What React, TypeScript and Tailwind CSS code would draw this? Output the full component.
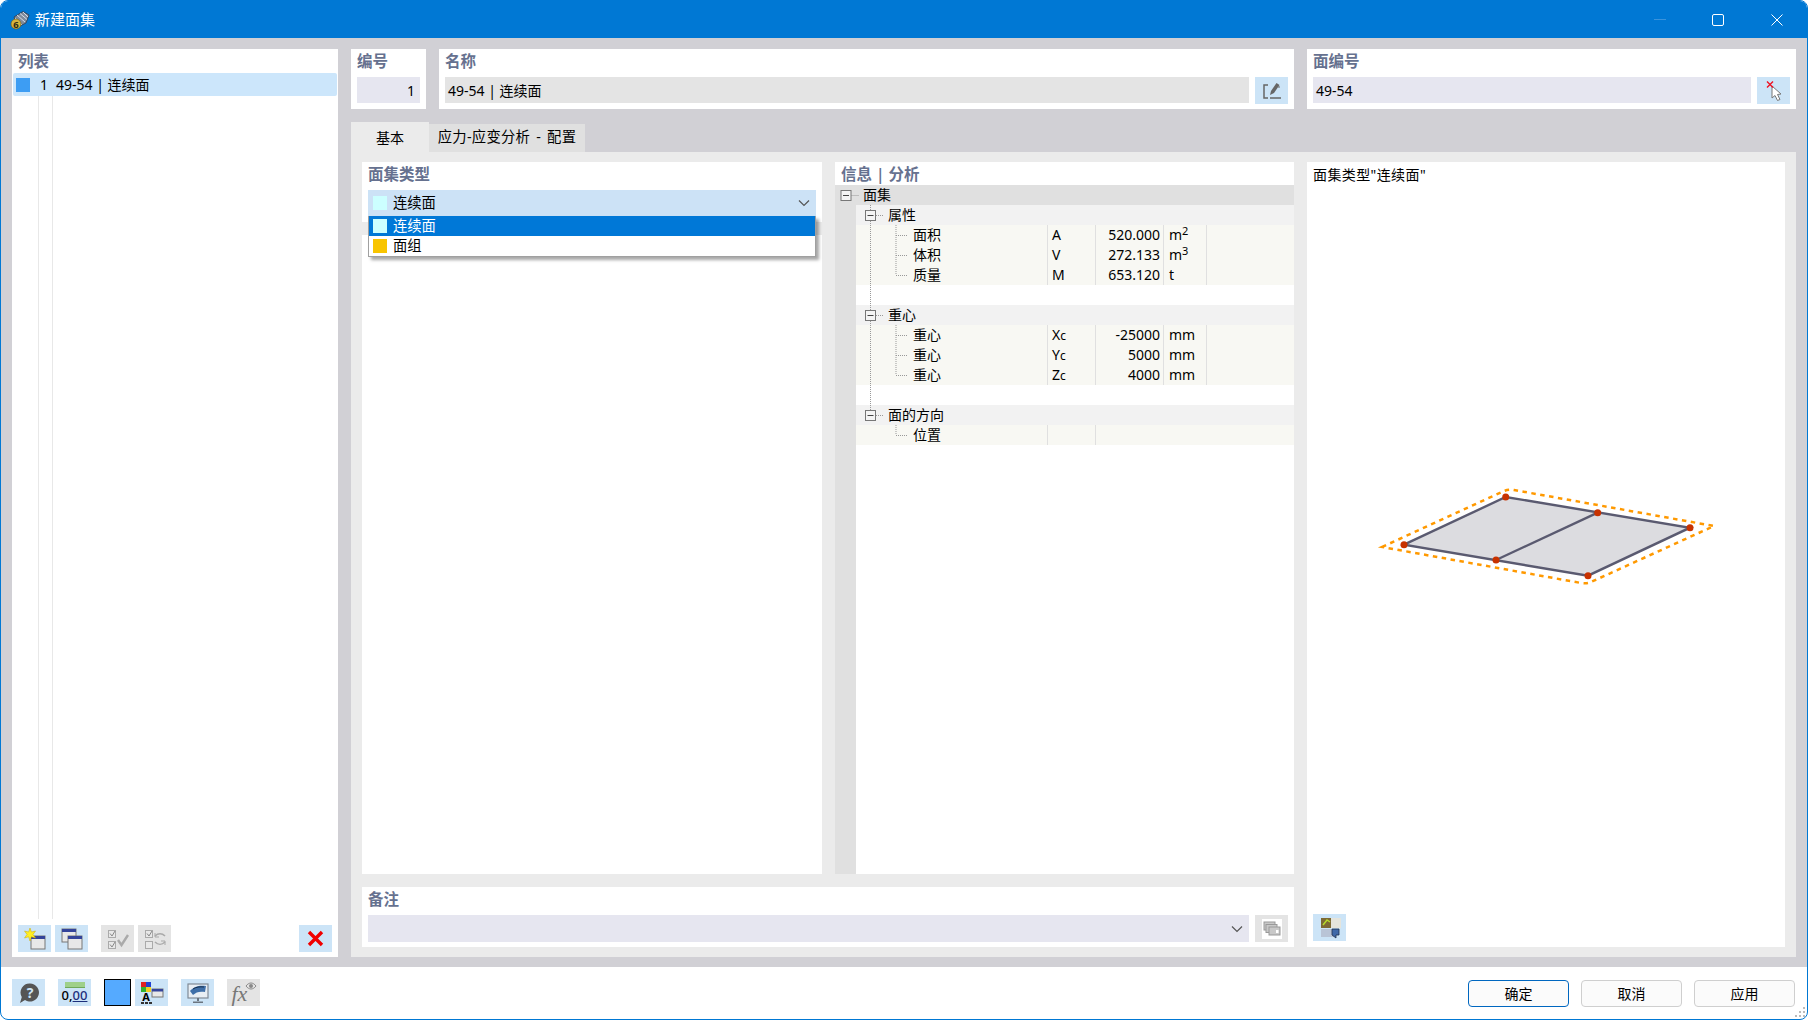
const FONT = "font-['Noto_Sans','Noto_Sans_CJK_SC',sans-serif]";

function Swatch({ color }: { color: string }) {
  return <span className="block h-[14px] w-[14px] shrink-0" style={{ backgroundColor: color }} />;
}

function Chevron() {
  return (
    <svg width="12" height="8" viewBox="0 0 12 8" fill="none" className="shrink-0">
      <path d="M1 1.5 6 6.5 11 1.5" stroke="#555" strokeWidth="1.2" />
    </svg>
  );
}

function Heading({ children }: { children: React.ReactNode }) {
  return <div className="h-[28px] pl-[6px] pt-[2px] text-[15.5px] font-semibold leading-[20px] text-[#66718f]">{children}</div>;
}

function IconBtn({ children, off }: { children: React.ReactNode; off?: boolean }) {
  return (
    <button className={`flex h-[27px] w-[33px] shrink-0 items-center justify-center ${off ? "bg-[#e4e4e4]" : "bg-[#cce4f7]"}`}>
      {children}
    </button>
  );
}

function WinGlyph({ x, y }: { x: number; y: number }) {
  return (
    <g>
      <rect x={x} y={y} width="14" height="13" fill="#e8e8e8" stroke="#777" />
      <rect x={x} y={y} width="14" height="3" fill="#34449a" />
    </g>
  );
}

function NewIcon() {
  return (
    <svg width="24" height="24" viewBox="0 0 24 24">
      <WinGlyph x={8} y={9} />
      <path d="M7 1 8.4 5 12.5 4 10 7.4 12.5 11 8.4 9.8 7 14 5.6 9.8 1.5 11 4 7.4 1.5 4 5.6 5Z" fill="#ffee22" stroke="#c8a800" strokeWidth=".5" />
    </svg>
  );
}

function CopyIcon() {
  return (
    <svg width="24" height="24" viewBox="0 0 24 24">
      <WinGlyph x={2} y={2} />
      <WinGlyph x={8} y={9} />
    </svg>
  );
}

function CheckAllIcon() {
  return (
    <svg width="24" height="24" viewBox="0 0 24 24" fill="none">
      <rect x="2.5" y="3.5" width="7" height="7" fill="#e8e8e8" stroke="#aaa" />
      <rect x="2.5" y="14.5" width="7" height="7" fill="#e8e8e8" stroke="#aaa" />
      <path d="M4 6.5 6 9l3-5M4 17.5 6 20l3-5" stroke="#888" />
      <path d="M12 13 15.5 18 22 8" stroke="#aaa" strokeWidth="2.4" />
    </svg>
  );
}

function ToggleIcon() {
  return (
    <svg width="24" height="24" viewBox="0 0 24 24" fill="none">
      <rect x="2.5" y="3.5" width="7" height="7" fill="#e8e8e8" stroke="#aaa" />
      <rect x="2.5" y="14.5" width="7" height="7" fill="#e8e8e8" stroke="#aaa" />
      <path d="M4 6.5 6 9l3-5" stroke="#888" />
      <path d="M12 9c3-3 7-3 10 0M22 15c-3 3-7 3-10 0" stroke="#aaa" strokeWidth="1.6" />
      <path d="M12 6v4h4M22 18v-4h-4" stroke="#aaa" />
    </svg>
  );
}

function DeleteIcon() {
  return (
    <svg width="17" height="17" viewBox="0 0 17 17">
      <path d="M2 2 15 15M15 2 2 15" stroke="#f00000" strokeWidth="3.4" />
    </svg>
  );
}

function HelpIcon() {
  return (
    <svg width="24" height="24" viewBox="0 0 24 24">
      <path d="M13 2.5a9 9 0 1 1-5 16.500L3 22l1.800-6A9 9 0 0 1 13 2.500Z" fill="#555" />
      <text x="13" y="16.5" textAnchor="middle" fontSize="14" fontWeight="700" fill="#cce4f7">?</text>
    </svg>
  );
}

function DecimalIcon() {
  return (
    <div className="flex flex-col items-center">
      <span className="block h-[6px] w-[20px] border-b border-[#6fa85a] bg-[#9fd08a]" />
      <span className="text-[13px] font-medium leading-[15px] text-black">
        0,<span className="text-[#1c2f7c] underline">00</span>
      </span>
    </div>
  );
}

function ColorsIcon() {
  return (
    <svg width="24" height="24" viewBox="0 0 24 24">
      <rect x="1" y="1" width="5" height="5" fill="#e02020" />
      <rect x="6" y="1" width="5" height="5" fill="#2040d0" />
      <rect x="1" y="6" width="5" height="5" fill="#30b030" />
      <rect x="6" y="6" width="5" height="5" fill="#f0d020" />
      <rect x="12" y="8" width="11" height="8" fill="#e8e8e8" stroke="#777" />
      <rect x="12" y="8" width="11" height="2.5" fill="#34449a" />
      <text x="6" y="20" textAnchor="middle" fontSize="11" fontWeight="700" fill="#000">A</text>
      <path d="M1 21h3v2H1zM5 21h3v2H5zM9 21h3v2H9z" fill="#333" />
    </svg>
  );
}

function MonitorIcon() {
  return (
    <svg width="24" height="24" viewBox="0 0 24 24">
      <rect x="2" y="3" width="20" height="14" fill="#e8eef4" stroke="#7f8a96" strokeWidth="1.2" />
      <path d="M4 10C8 5 14 4 20 5l-1 6c-5-1-9 0-12 3Z" fill="#3f6fa8" />
      <path d="M7 8c3-2 7-2.5 11-2" stroke="#16304f" fill="none" />
      <path d="M11 17h2v3h-2zM7 20.500h10V22H7z" fill="#6b7580" />
    </svg>
  );
}

function FxIcon() {
  return (
    <div className="relative h-[24px] w-[26px]">
      <span className="absolute bottom-[-1px] left-[1px] font-['Liberation_Serif',serif] text-[22px] italic leading-[24px] text-[#777]">fx</span>
      <svg width="12" height="10" viewBox="0 0 12 10" className="absolute right-0 top-0" fill="none">
        <path d="M1 5c3-4 7-4 10 0-3 4-7 4-10 0Z" stroke="#888" />
        <circle cx="6" cy="5" r="2" fill="#888" />
      </svg>
    </div>
  );
}

const GROUPS = [
  {
    title: "属性",
    items: [
      { label: "面积", sym: "A", val: "520.000", unit: "m", sup: "2" },
      { label: "体积", sym: "V", val: "272.133", unit: "m", sup: "3" },
      { label: "质量", sym: "M", val: "653.120", unit: "t" },
    ],
  },
  {
    title: "重心",
    items: [
      { label: "重心", sym: "X", sub: "c", val: "-25000", unit: "mm" },
      { label: "重心", sym: "Y", sub: "c", val: "5000", unit: "mm" },
      { label: "重心", sym: "Z", sub: "c", val: "4000", unit: "mm" },
    ],
  },
];

type Item = { label: string; sym: string; sub?: string; val?: string; unit?: string; sup?: string };

function PropRow({ item, short }: { item: Item; short?: boolean }) {
  return (
    <div className="flex h-[20px] bg-[#f8f8f3] leading-[20px]">
      <div className="w-[191px] pl-[57px]">{item.label}</div>
      <div className="w-[48px] border-l border-[#e0e0e0] pl-[4px]">
        {item.sym}
        {item.sub && <span className="text-[12px]">{item.sub}</span>}
      </div>
      <div className={`border-l border-[#e0e0e0] pr-[3px] text-right ${short ? "flex-1" : "w-[68px]"}`}>{item.val}</div>
      {!short && (
        <>
          <div className="w-[43px] border-l border-[#e0e0e0] pl-[5px]">
            {item.unit}
            {item.sup && <sup className="top-[-5px] text-[11px] leading-none">{item.sup}</sup>}
          </div>
          <div className="flex-1 border-l border-[#e0e0e0]" />
        </>
      )}
    </div>
  );
}

function GroupRow({ title }: { title: string }) {
  return <div className="h-[20px] bg-[#f2f2f2] pl-[32px] leading-[20px]">{title}</div>;
}

function ExpandBox({ x, y }: { x: number; y: number }) {
  return (
    <g>
      <rect x={x - 5} y={y - 5} width="10" height="10" fill="#f4f4f4" stroke="#777" />
      <path d={`M${x - 3} ${y}h6`} stroke="#444" />
    </g>
  );
}

function TreeLines() {
  // offsets from the tree's top left, which sits at 835,185
  return (
    <svg width="90" height="270" className="absolute left-0 top-0" fill="none">
      <g stroke="#999" strokeDasharray="1 1">
        <path d="M16.5 10.5h7" />
        <path d="M35.5 20v205" />
        <path d="M41 30.5h7M41 130.500h7M41 230.500h7" />
        <path d="M61 40v50M61 50.500h12M61 70.500h12M61 90.500h12" />
        <path d="M61 140v50M61 150.500h12M61 170.500h12M61 190.500h12" />
        <path d="M61 240v10M61 250.500h12" />
      </g>
      <ExpandBox x={11} y={10.5} />
      <ExpandBox x={35.5} y={30.5} />
      <ExpandBox x={35.5} y={130.5} />
      <ExpandBox x={35.5} y={230.5} />
    </svg>
  );
}

export default function App() {
  return (
    <div className={`flex h-[1020px] w-[1808px] flex-col overflow-hidden rounded-lg border border-[#0078d4] bg-white text-[14px] text-black ${FONT}`}>
      <div className="flex h-[37px] shrink-0 items-center bg-[#0078d4] pl-[9px] text-white">
        <svg width="20" height="20" viewBox="0 0 20 20" className="shrink-0">
          <path d="M4 7 13 1.5 19 5 16 13 8 17Z" fill="#7f8b9c" stroke="#2f3b4e" strokeWidth=".8" />
          <path d="M7 5 15 12M10 3.500 17 9.500M5 8l7 7M13 2l5 5" stroke="#dfe6ee" strokeWidth=".9" />
          <circle cx="6" cy="14" r="5" fill="#d8b43c" stroke="#6d5a16" strokeWidth=".6" />
          <text x="6" y="17.5" textAnchor="middle" fontSize="9.5" fontWeight="700" fill="#2c2a14">6</text>
        </svg>
        <span className="ml-[5px] text-[15px]">新建面集</span>
        <div className="ml-auto flex h-full items-center text-white">
          <div className="mr-[46px] h-px w-[12px] bg-[#3a93dc]" />
          <div className="mr-[47px] h-[12px] w-[12px] rounded-[2px] border border-white" />
          <svg width="12" height="12" viewBox="0 0 12 12" className="mr-[24px]">
            <path d="M.5.5 11.500 11.500M11.500.5.5 11.500" stroke="#fff" />
          </svg>
        </div>
      </div>

      <div className="flex min-h-0 flex-1 gap-[13px] bg-[#d1d0d5] px-[11px] pb-[10px] pt-[11px]">
        {/* list */}
        <div className="flex w-[326px] shrink-0 flex-col bg-white">
          <Heading>列表</Heading>
          <div className="-mt-[4px] mx-px flex h-[23px] shrink-0 items-center rounded-[2px] bg-[#cce6fb] leading-[20px]">
            <span className="ml-[3px]">
              <Swatch color="#3d9df3" />
            </span>
            <span className="w-[18px] flex-none text-right">1</span>
            <span className="ml-[8px]">49-54 | 连续面</span>
          </div>
          <div className="ml-[26px] min-h-0 w-[15px] flex-1 border-x border-[#e8e8e8]" />
          <div className="mb-[5px] mt-[6px] flex px-[6px]">
            <div className="flex gap-[4px]">
              <IconBtn><NewIcon /></IconBtn>
              <IconBtn><CopyIcon /></IconBtn>
            </div>
            <div className="ml-[13px] flex gap-[4px]">
              <IconBtn off><CheckAllIcon /></IconBtn>
              <IconBtn off><ToggleIcon /></IconBtn>
            </div>
            <div className="ml-auto">
              <IconBtn><DeleteIcon /></IconBtn>
            </div>
          </div>
        </div>

        <div className="flex min-w-0 flex-1 flex-col">
          {/* top fields */}
          <div className="flex h-[60px] shrink-0 gap-[13px]">
            <div className="w-[75px] bg-white">
              <Heading>编号</Heading>
              <div className="mx-[6px] h-[26px] bg-[#e6e6f0] pr-[5px] pt-px text-right leading-[26px]">1</div>
            </div>
            <div className="w-[855px] bg-white">
              <Heading>名称</Heading>
              <div className="flex gap-[6px] px-[6px]">
                <div className="h-[26px] flex-1 bg-[#e4e4e4] pl-[3px] pt-px leading-[26px]">49-54 | 连续面</div>
                <IconBtn>
                  <svg width="20" height="20" viewBox="0 0 20 20" fill="none">
                    <path d="M6 4H2v13h4M8 17h11" stroke="#666" strokeWidth="1.5" />
                    <path d="M8 14 9 10 14.500 2 17.500 4 12 12Z" fill="#666" />
                    <path d="M16 6h2" stroke="#666" />
                  </svg>
                </IconBtn>
              </div>
            </div>
            <div className="flex-1 bg-white">
              <Heading>面编号</Heading>
              <div className="flex gap-[6px] px-[6px]">
                <div className="h-[26px] flex-1 bg-[#e6e6f0] pl-[3px] pt-px leading-[26px]">49-54</div>
                <IconBtn>
                  <svg width="22" height="22" viewBox="0 0 22 22" fill="none">
                    <path d="M9 6 9 18 12 15.500 14.500 20.500 17 19.500 14.500 14.500 18 14Z" fill="#fff" stroke="#777" />
                    <path d="M4 1.500 10 7.500M10 1.500 4 7.500" stroke="#ee1122" strokeWidth="1.4" />
                  </svg>
                </IconBtn>
              </div>
            </div>
          </div>

          {/* tabs */}
          <div className="mt-[13px] flex h-[30px] shrink-0 items-end">
            <div className="flex h-[30px] w-[78px] items-center justify-center bg-[#ebebeb]">基本</div>
            <div className="flex h-[28px] w-[156px] items-center justify-center whitespace-nowrap bg-[#e0e0e0] pb-[2px] text-[14.3px] tracking-[0.3px] [word-spacing:2px]">应力-应变分析 - 配置</div>
          </div>

          <div className="flex min-h-0 flex-1 gap-[13px] bg-[#ebebeb] px-[11px] py-[10px]">
            <div className="flex w-[932px] shrink-0 flex-col gap-[13px]">
              <div className="flex min-h-0 flex-1 gap-[13px]">
                {/* surface set type */}
                <div className="flex w-[460px] shrink-0 flex-col gap-[13px]">
                  <div className="h-[60px] shrink-0 bg-white">
                    <Heading>面集类型</Heading>
                    <div className="relative mx-[6px] flex h-[26px] items-center bg-[#cce2f6] pl-[5px] pr-[6px]">
                      <Swatch color="#ccffff" />
                      <span className="ml-[6px] flex-1 pb-px text-[14.3px]">连续面</span>
                      <Chevron />
                      <div className="absolute left-0 right-0 top-[26px] z-10 border border-t-0 border-[#a0a0a0] bg-white shadow-[3px_3px_3px_rgba(0,0,0,0.35)]">
                        <div className="flex h-[20px] items-center bg-[#0078d7] pl-[4px] text-white">
                          <Swatch color="#ccffff" />
                          <span className="ml-[6px] text-[14.3px]">连续面</span>
                        </div>
                        <div className="flex h-[20px] items-center pl-[4px]">
                          <Swatch color="#f8c400" />
                          <span className="ml-[6px] text-[14.3px]">面组</span>
                        </div>
                      </div>
                    </div>
                  </div>
                  <div className="min-h-0 flex-1 bg-white" />
                </div>

                {/* info */}
                <div className="flex min-w-0 flex-1 flex-col bg-white">
                  <Heading>信息 | 分析</Heading>
                  <div className="relative -mt-[5px] flex min-h-0 flex-1 flex-col">
                    <div className="h-[20px] shrink-0 bg-[#e0e0e0] pl-[28px] leading-[20px]">面集</div>
                    <div className="flex min-h-0 flex-1">
                      <div className="w-[21px] shrink-0 bg-[#e0e0e0]" />
                      <div className="min-w-0 flex-1">
                        {GROUPS.map((g) => (
                          <div key={g.title}>
                            <GroupRow title={g.title} />
                            {g.items.map((it) => (
                              <PropRow key={it.sym} item={it} />
                            ))}
                            <div className="h-[20px]" />
                          </div>
                        ))}
                        <GroupRow title="面的方向" />
                        <PropRow item={{ label: "位置", sym: "" }} short />
                      </div>
                    </div>
                    <TreeLines />
                  </div>
                </div>
              </div>

              {/* comment */}
              <div className="h-[60px] shrink-0 bg-white">
                <Heading>备注</Heading>
                <div className="flex gap-[6px] px-[6px]">
                  <div className="flex h-[27px] flex-1 items-center justify-end bg-[#e6e6f0] pr-[6px]">
                    <Chevron />
                  </div>
                  <IconBtn off>
                    <span className="flex h-[20px] w-[20px] items-center justify-center bg-white">
                      <svg width="18" height="16" viewBox="0 0 18 16">
                        <rect x="1" y="1" width="11" height="8" fill="#c8c8c8" stroke="#999" />
                        <rect x="3" y="3.5" width="11" height="8" fill="#c8c8c8" stroke="#999" />
                        <rect x="6" y="6" width="11" height="8" fill="#c8c8c8" stroke="#999" />
                        <rect x="13" y="9" width="2.5" height="3" fill="#fff" />
                      </svg>
                    </span>
                  </IconBtn>
                </div>
              </div>
            </div>

            {/* preview */}
            <div className="flex min-w-0 flex-1 flex-col bg-white">
              <div className="px-[6px] pt-[3px] tracking-[0.4px] leading-[20px]">面集类型"连续面"</div>
              <div className="flex min-h-0 flex-1 items-center justify-center">
                <svg width="360" height="120" viewBox="1370 480 360 120" className="ml-[9px] mt-[-18px]" fill="none">
                  <path d="M1381 546 1503 490Q1508 488 1513 489L1713 525 1590 581Q1586 583 1580 582Z" stroke="#ff9900" strokeWidth="2.5" strokeDasharray="4.500 4.500" />
                  <path d="M1403 543.700 1504.700 496 1689 526.700 1587 574.700Z" fill="#dcdce0" stroke="#5a5a70" strokeWidth="2.4" />
                  <path d="M1495 559 1596.700 511.700" stroke="#5a5a70" strokeWidth="2.4" />
                  {[[1403, 543.7], [1504.7, 496], [1689, 526.7], [1587, 574.7], [1596.7, 511.7], [1495, 559]].map(([x, y]) => (
                    <circle key={x} cx={x} cy={y} r="3.5" fill="#c83200" />
                  ))}
                </svg>
              </div>
              <div className="mb-[6px] ml-[6px]">
                <IconBtn>
                  <svg width="22" height="22" viewBox="0 0 22 22">
                    <rect x="2" y="1" width="20" height="10" fill="#e4e4dc" />
                    <rect x="2" y="1" width="10" height="10" fill="#7d6a35" />
                    <path d="M4 8 8 3l3 2" stroke="#b6dc2a" strokeWidth="1.5" fill="none" />
                    <rect x="2" y="12" width="14" height="8" fill="#b9c4d6" />
                    <path d="M13 12h7v6h-3v3l-4-3Z" fill="#3f68a8" stroke="#20304f" strokeWidth=".8" />
                  </svg>
                </IconBtn>
              </div>
            </div>
          </div>
        </div>
      </div>

      {/* footer */}
      <div className="relative flex h-[52px] shrink-0 items-start justify-between pl-[11px] pr-[12px] pt-[12px]">
        <div className="flex items-start">
          <IconBtn><HelpIcon /></IconBtn>
          <div className="ml-[13px]">
            <IconBtn><DecimalIcon /></IconBtn>
          </div>
          <span className="ml-[13px] block h-[27px] w-[27px] border border-black bg-[#55aaff]" />
          <div className="ml-[4px]">
            <IconBtn><ColorsIcon /></IconBtn>
          </div>
          <div className="ml-[13px]">
            <IconBtn><MonitorIcon /></IconBtn>
          </div>
          <div className="ml-[13px]">
            <IconBtn off><FxIcon /></IconBtn>
          </div>
        </div>
        <div className="flex gap-[12px] pt-px">
          <button className="h-[27px] w-[101px] rounded-[4px] border border-[#0067c0] bg-[#fbfbfb]">确定</button>
          <button className="h-[27px] w-[101px] rounded-[4px] border border-[#cfcfcf] bg-[#fbfbfb]">取消</button>
          <button className="h-[27px] w-[101px] rounded-[4px] border border-[#cfcfcf] bg-[#fbfbfb]">应用</button>
        </div>
        <svg width="12" height="12" viewBox="0 0 12 12" className="absolute bottom-px right-px" fill="#bbb">
          <path d="M9 1h2v2H9zM5 5h2v2H5zM9 5h2v2H9zM1 9h2v2H1zM5 9h2v2H5zM9 9h2v2H9z" />
        </svg>
      </div>
    </div>
  );
}
